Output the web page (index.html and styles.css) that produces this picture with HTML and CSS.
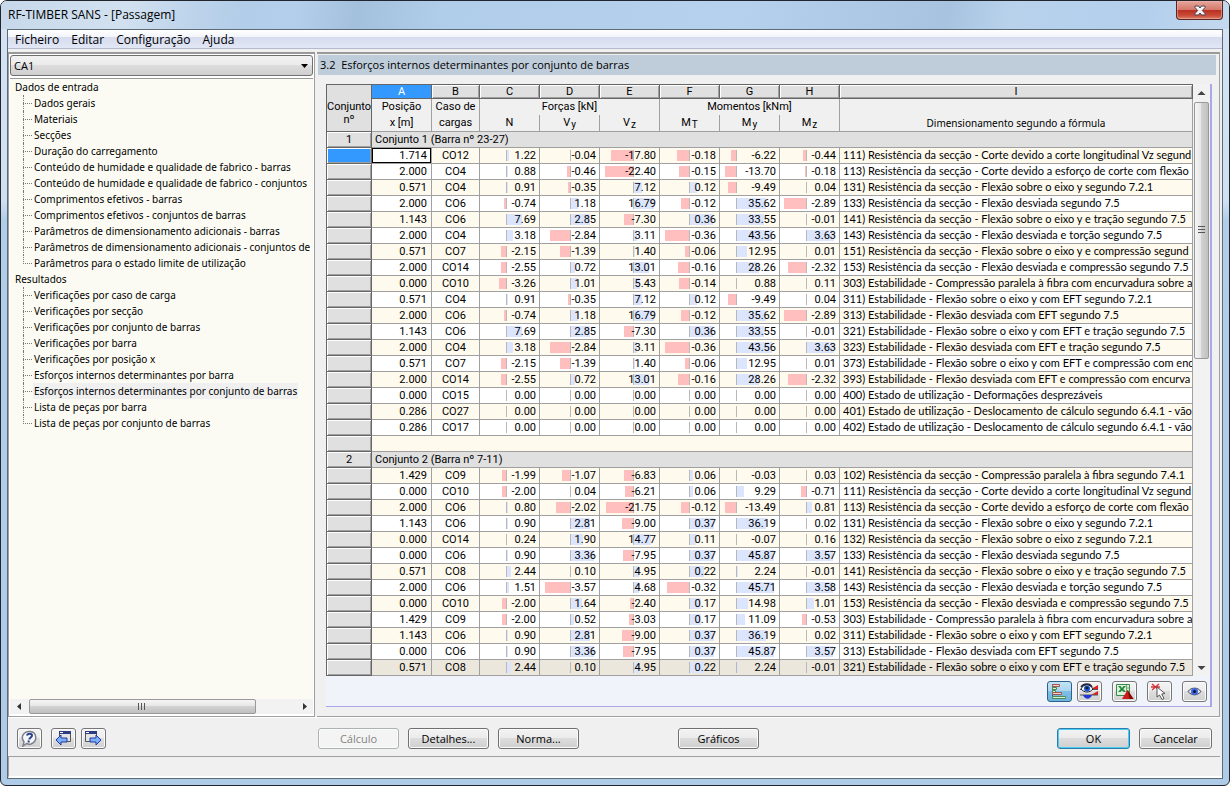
FILE: index.html
```html
<!DOCTYPE html>
<html lang="pt">
<head>
<meta charset="utf-8">
<title>RF-TIMBER SANS - [Passagem]</title>
<link rel="stylesheet" href="styles.css">
</head>
<body>
<div class="window">
  <header class="titlebar">
    <h1>RF-TIMBER SANS - [Passagem]</h1>
    <button class="close" aria-label="Fechar">
      <svg width="12" height="11" viewBox="0 0 12 11"><path d="M1 1h3.400L6 3l1.600-2H11v1.500L8.300 5.500 11 8.500V10H7.600L6 8l-1.600 2H1V8.500L3.700 5.500 1 2.500z" fill="#f4f4f4" stroke="#4b4552"/></svg>
    </button>
  </header>
  <div class="client">
    <nav class="menu">
      <button>Ficheiro</button><button>Editar</button><button>Configuração</button><button>Ajuda</button>
    </nav>
    <div class="panes">
      <aside class="sidebar">
        <div class="combo">
          <select aria-label="Caso"><option>CA1</option></select>
          <svg class="combo-arrow" width="7" height="4" viewBox="0 0 7 4"><path d="M0 0h7L3.500 4z"/></svg>
        </div>
        <div class="tree">
          <ul class="roots">
            <li>Dados de entrada
              <ul>
                <li><span>Dados gerais</span></li>
                <li><span>Materiais</span></li>
                <li><span>Secções</span></li>
                <li><span>Duração do carregamento</span></li>
                <li><span>Conteúdo de humidade e qualidade de fabrico - barras</span></li>
                <li><span>Conteúdo de humidade e qualidade de fabrico - conjuntos</span></li>
                <li><span>Comprimentos efetivos - barras</span></li>
                <li><span>Comprimentos efetivos - conjuntos de barras</span></li>
                <li><span>Parâmetros de dimensionamento adicionais - barras</span></li>
                <li><span>Parâmetros de dimensionamento adicionais - conjuntos de</span></li>
                <li><span>Parâmetros para o estado limite de utilização</span></li>
              </ul>
            </li>
            <li>Resultados
              <ul>
                <li><span>Verificações por caso de carga</span></li>
                <li><span>Verificações por secção</span></li>
                <li><span>Verificações por conjunto de barras</span></li>
                <li><span>Verificações por barra</span></li>
                <li><span>Verificações por posição x</span></li>
                <li><span>Esforços internos determinantes por barra</span></li>
                <li><span class="current">Esforços internos determinantes por conjunto de barras</span></li>
                <li><span>Lista de peças por barra</span></li>
                <li><span>Lista de peças por conjunto de barras</span></li>
              </ul>
            </li>
          </ul>
        </div>
        <div class="hscroll">
          <svg width="17" height="15" viewBox="0 0 17 15"><path d="M11 4v7L7 7.500z" fill="#333"/></svg>
          <div class="htrack"><div class="hthumb"><i></i><i></i><i></i></div></div>
          <svg width="17" height="15" viewBox="0 0 17 15"><path d="M7 4v7l4-3.500z" fill="#333"/></svg>
        </div>
      </aside>
      <main class="main">
        <h2>3.2&nbsp; Esforços internos determinantes por conjunto de barras</h2>
        <section class="sheet">
          <div class="grid-area">
            <table>
              <colgroup><col class="w-head"><col class="w-num"><col class="w-case"><col class="w-num"><col class="w-num"><col class="w-num"><col class="w-num"><col class="w-num"><col class="w-num"><col></colgroup>
              <thead>
                <tr class="letters"><th rowspan="3" class="corner">Conjunto<br>nº</th><th class="active">A</th><th>B</th><th>C</th><th>D</th><th>E</th><th>F</th><th>G</th><th>H</th><th>I</th></tr>
                <tr class="names"><th>Posição</th><th>Caso de</th><th colspan="3">Forças [kN]</th><th colspan="3">Momentos [kNm]</th><th></th></tr>
                <tr class="units"><th>x [m]</th><th>cargas</th><th>N</th><th>V<sub>y</sub></th><th>V<sub>z</sub></th><th>M<sub>T</sub></th><th>M<sub>y</sub></th><th>M<sub>z</sub></th><th>Dimensionamento segundo a fórmula</th></tr>
              </thead>
              <tbody id="rows"></tbody>
            </table>
            <div class="vscroll">
              <svg width="17" height="18" viewBox="0 0 17 18"><path d="M4.500 11h8l-4-4z" fill="#444"/></svg>
              <div class="vtrack"><div class="vthumb"><i></i><i></i><i></i></div></div>
              <svg width="17" height="16" viewBox="0 0 17 16"><path d="M4.500 6h8l-4 4z" fill="#444"/></svg>
            </div>
          </div>
          <div class="tools">
            <button class="icon on" aria-label="Barras">
              <svg width="21" height="17" viewBox="0 0 21 17"><path d="M3.500 1v15" stroke="#555"/><path fill="#fbd0ca" stroke="#9a5a54" d="M3.500 1.500h7v2h-7z"/><path fill="#d0f6d0" stroke="#4f8a5a" d="M3.500 4.500h4v2h-4zM3.500 7.500h3v2h-3z"/><path fill="#fbd0ca" stroke="#9a5a54" d="M3.500 9.500h9v2h-9z"/><path fill="#d0f6d0" stroke="#4f8a5a" d="M3.500 13.500h13v2h-13z"/></svg>
            </button>
            <button class="icon" aria-label="Ver diagramas">
              <svg width="21" height="17" viewBox="0 0 21 17"><path d="M12 6l7-4v4zM12 12l7-4v4z" fill="#d22"/><path d="M1 6.500h18M1 12h18" stroke="#555"/><path d="M2 6C4 1 11 0 14 6c-3 4-9 4-12 0z" fill="#eef4ff" stroke="#223"/><path d="M2 4C5 0 11 0 13 4" fill="none" stroke="#223" stroke-width="1.500"/><circle cx="8" cy="5.500" r="3" fill="#1c50c8"/><circle cx="8" cy="5" r="1.300" fill="#021"/><path d="M4 12h9c-2 5-7 5-9 0z" fill="#2337d8"/></svg>
            </button>
            <button class="icon gap" aria-label="Exportar para Excel">
              <svg width="21" height="17" viewBox="0 0 21 17"><path d="M2.500 1.500h13v11h-13z" fill="#dff0df" stroke="#3a8a4a"/><path d="M12.500 2v10M12.500 5h3M12.500 8h3" stroke="#6a6"/><path d="M4 3h2.500L8 5l1.500-2H12L9.300 6l2.700 3H9.500L8 7.500 6.500 9H4l2.700-3z" fill="#1f8a3c"/><path d="M13.500 7l6 9H8z" fill="#cf1a1a"/><path d="M13.500 7l6 9h-4z" fill="#7e0808"/></svg>
            </button>
            <button class="icon gap" aria-label="Selecionar">
              <svg width="21" height="17" viewBox="0 0 21 17"><path d="M3 1l7 6M10 1L3 7M2 4h9" stroke="#d8343c" stroke-width="1.400"/><path d="M8 4v10l2.500-2 2.500 4.500 2-1-2.300-4.500 3.300-.500z" fill="#fff" stroke="#555"/></svg>
            </button>
            <button class="icon gap" aria-label="Visibilidade">
              <svg width="21" height="17" viewBox="0 0 21 17"><path d="M4 8.500C7 4 14 4 17 8.500c-4 4.500-9 4.500-13 0z" fill="#dfe6f2" stroke="#445"/><circle cx="10.500" cy="8.500" r="3.500" fill="#3d68d8"/><circle cx="10.500" cy="8.500" r="1.500" fill="#06103c"/></svg>
            </button>
          </div>
        </section>
      </main>
    </div>
    <footer class="actions">
      <div class="quick">
        <button class="icon" aria-label="Ajuda">
          <svg width="21" height="17" viewBox="0 0 21 17"><path d="M4 16l1-4C1 7 5 1 11 1.500c7 .500 8 10 1 12.500-2 .500-3 .200-4.500-.500z" fill="#f5f6f8" stroke="#7c8088" stroke-width="1.500"/><path d="M8 5.500C8.500 3 13 3 13 5.500c0 2-2.500 2-2.700 4M9.800 10.500l-.300 2" fill="none" stroke="#2b418e" stroke-width="2"/></svg>
        </button>
        <button class="icon" aria-label="Anterior">
          <svg width="21" height="17" viewBox="0 0 21 17"><path d="M6.500 1.500h11v10h-11z" fill="#e4e4e4" stroke="#555"/><path d="M6 1h12v3H6z" fill="#2c3c80"/><path d="M7 2.500h3" stroke="#fff"/><path d="M3 10l5-5v3h6v4H8v3z" fill="#7cb0ff" stroke="#1d3a9a"/></svg>
        </button>
        <button class="icon" aria-label="Seguinte">
          <svg width="21" height="17" viewBox="0 0 21 17"><path d="M2.500 1.500h11v10h-11z" fill="#e4e4e4" stroke="#555"/><path d="M2 1h12v3H2z" fill="#2c3c80"/><path d="M3 2.500h3" stroke="#fff"/><path d="M18 10l-5-5v3H7v4h6v3z" fill="#7cb0ff" stroke="#1d3a9a"/></svg>
        </button>
      </div>
      <button class="btn wide" disabled>Cálculo</button>
      <button class="btn wide">Detalhes...</button>
      <button class="btn wide">Norma...</button>
      <button class="btn wide graphics">Gráficos</button>
      <button class="btn default">OK</button>
      <button class="btn">Cancelar</button>
    </footer>
    <div class="status"></div>
  </div>
</div>
<script src="rows.js"></script>
</body>
</html>
```

FILE: styles.css
```css
* { box-sizing: border-box; }
body { margin: 0; background: #fff; color: #000; font: 10px/16px "Noto Sans", "Open Sans", sans-serif; }
h1, h2, ul { margin: 0; padding: 0; font-weight: normal; list-style: none; }
button, select { font: inherit; color: inherit; margin: 0; }
svg { display: block; flex: none; }

.window {
  min-height: 100vh; display: flex; flex-direction: column;
  padding: 0 6px 6px; border: 1px solid #22262c; border-radius: 7px 7px 6px 6px;
  background: linear-gradient(#d3e3f4 0, #cfe0f2 200px, #b0cde9 220px, #aecbe8 100%);
}
.titlebar {
  display: flex; justify-content: space-between; align-items: flex-start; height: 28px; margin: 0 -6px; padding-left: 7px;
  border-radius: 6px 6px 0 0;
  background: linear-gradient(100deg, #c6d8ea 0, #d2e1f0 10%, #bcd3ea 16%, #b2cde9 20%, #b4cfeb 24%, #a3c0dd 29%, #b0cdea 36%, #b5d1ed 60%, #a7c3df 77%, #b8d2ec 82%, #b3cfec 93%, #c4d9ee 100%);
}
.titlebar h1 { font: 12px/28px "Open Sans", "Noto Sans", sans-serif; }
.close {
  display: flex; justify-content: center; align-items: center; width: 47px; height: 19px; margin-right: 6px; padding: 0;
  border: 1px solid #5b2524; border-top: 0; border-radius: 0 0 4px 4px;
  background: linear-gradient(#e6a79c 0, #d5786b 48%, #b92f1f 50%, #c94a38 80%, #dc8168 100%); box-shadow: inset 0 0 0 1px #f0b8ae88;
}
.client { flex: 1; display: flex; flex-direction: column; border: 1px solid #5d6a78; background: #f0f0f0; }

.menu { display: flex; height: 19px; padding-left: 2px; border-bottom: 1px solid #b5bbcc; background: linear-gradient(#fff 0, #f3f5fb 38%, #d7dcee 40%, #e2e7f6 100%); }
.menu button { padding: 0 5px; margin-right: 2px; border: 0; background: none; font: 12px/19px "Open Sans", sans-serif; }

.panes { flex: 1; display: flex; gap: 2px; margin: 3px 2px 0 0; }
.sidebar { width: 307px; flex: none; display: flex; flex-direction: column; padding: 1px; border: 1px solid #a0a0a0; border-top: 2px solid #999; background: #fff; }
.combo { position: relative; height: 22px; }
.combo select { width: 100%; height: 21px; padding: 0 3px; border: 1px solid #707070; border-radius: 3px; appearance: none; background: linear-gradient(#f2f2f2 0, #ebebeb 48%, #ddd 50%, #cfcfcf 100%); font: 11px/19px "Open Sans", sans-serif; }
.combo-arrow { position: absolute; right: 5px; top: 9px; }
.tree { flex: 1; margin-top: 1px; border-top: 1px solid #999; background: #fbfbf3; overflow: hidden; white-space: nowrap; }
.roots > li { padding-left: 5px; }
.roots ul { margin-left: 8px; }
.roots ul li { position: relative; padding-left: 10px; }
.roots ul li::before { content: ""; position: absolute; left: 0; top: 0; width: 1px; height: 100%; border-left: 1px dotted #777; }
.roots ul li::after { content: ""; position: absolute; left: 0; top: 8px; width: 9px; border-top: 1px dotted #777; }
.roots ul li:last-child::before { height: 9px; }
.roots ul span { display: inline-block; padding: 0 1px; }
.roots .current { background: #f0f0f0; }
.hscroll { display: flex; height: 15px; margin-bottom: 1px; background: #f2f2f2; }
.htrack { flex: 1; padding-left: 2px; }
.hthumb { display: flex; justify-content: center; align-items: center; gap: 1px; width: 85%; height: 15px; border: 1px solid #999; border-radius: 2px; background: linear-gradient(#f5f5f5 0, #e6e6e6 48%, #d2d2d2 50%, #c0c0c0 100%); }
.hthumb i { width: 2px; height: 7px; border-left: 1px solid #555; }

.main { flex: 1; min-width: 0; padding: 1px 3px 9px 0; border: 1px solid #a0a0a0; border-left: 0; border-top: 2px solid #999; }
.main h2 { height: 20px; padding-left: 2px; margin-left: 1px; background: #bfccda; font: 11px/20px "Open Sans", sans-serif; }
.sheet { margin: 9px 4px 0 9px; border-right: 2px solid #aaa8e8; border-bottom: 1px solid #aaa8e8; background: #f0f3f9; }
.grid-area { display: flex; }

table { flex: 1; min-width: 0; width: 0; table-layout: fixed; border-spacing: 0; border-top: 1px solid #666; border-left: 1px solid #666; background: #fff; font: 11px/15px Roboto, "Liberation Sans", sans-serif; }
.w-head { width: 45px; } .w-num { width: 60px; } .w-case { width: 48px; }
th, td { padding: 0; border-right: 1px solid #a0a0a0; border-bottom: 1px solid #a0a0a0; font-weight: normal; white-space: nowrap; overflow: hidden; }
thead th { background: #f0f0f0; }
.letters th { height: 14px; line-height: 12px; background: #e0e0e0; border-color: #666; box-shadow: inset 1px 1px #fff, inset -1px -1px #a0a0a0; }
.letters .active { background: #3399ff; color: #fff; box-shadow: none; }
.letters .corner { border-color: #666; box-shadow: none; line-height: 13px; padding-top: 10px; }
.names th { height: 16px; line-height: 16px; border-bottom: 0; }
.units th { height: 17px; line-height: 14px; }
.units sub { vertical-align: -2px; line-height: 8px; font-size: 10px; padding-left: 1px; }
.units th:last-child { font-size: 10px; font-family: "Noto Sans", sans-serif; }
tbody th, tbody td { height: 16px; }
tbody th { background: #e0e0e0; border-color: #666; box-shadow: inset 1px 1px #fff, inset -1px -1px #a0a0a0; }
tbody tr:nth-child(even) td { background: #fffaee; }
tbody tr.group td { background: #e0e0e0; padding-left: 3px; }
tbody tr.last td { background: #ece7dc; }
tbody th.active { background: #3399ff; }
.pos { text-align: right; padding-right: 4px; }
tbody td.pos.active { background: #fff; box-shadow: inset 0 0 0 1px #000; }
.case { text-align: center; }
.val { position: relative; text-align: right; padding-right: 3px; }
.val b { position: relative; font-weight: normal; }
.axis, .bar { position: absolute; top: 2px; bottom: 2px; }
.axis { width: 1px; background: #b8b8b8; }
.bar { background: #dbe5fd; }
.bar.neg { background: #ffbfbf; }
.formula { padding: 0 0 0 3px; font-family: Lato, sans-serif; }
.formula div { overflow: hidden; height: 15px; line-height: 14px; }

.vscroll { width: 17px; display: flex; flex-direction: column; background: #f2f2f2; }
.vtrack { flex: 1; padding: 0 1px; }
.vthumb { display: flex; flex-direction: column; justify-content: center; align-items: center; gap: 1px; height: 46%; border: 1px solid #999; border-radius: 2px; background: linear-gradient(90deg, #f5f5f5 0, #e6e6e6 48%, #d2d2d2 50%, #c0c0c0 100%); }
.vthumb i { width: 7px; height: 2px; border-top: 1px solid #555; }

.tools { display: flex; justify-content: flex-end; gap: 5px; height: 30px; padding: 5px 3px 0 0; }
.tools .gap { margin-left: 5px; }
.icon { display: flex; justify-content: center; align-items: center; width: 25px; height: 21px; padding: 0; border: 1px solid #777; border-radius: 3px; background: linear-gradient(#f4f4f4 0, #ececec 48%, #dedede 50%, #d0d0d0 100%); box-shadow: inset 0 0 0 1px #fbfbfb; }
.icon.on { border-color: #2c628b; background: linear-gradient(#c4e2f4 0, #a8d5ef 48%, #7fbfe4 50%, #6cb3dc 100%); box-shadow: none; }

.actions { display: flex; gap: 9px; padding: 10px 8px 7px 9px; border-bottom: 1px solid #a0a0a0; margin: 0 2px 0 0; border-top: 1px solid #fff; }
.quick { width: 292px; display: flex; gap: 5px; }
.quick .icon:first-child { margin-right: 4px; }
.btn { width: 73px; height: 21px; padding: 0; border: 1px solid #707070; border-radius: 3px; background: linear-gradient(#f3f3f3 0, #ebebeb 48%, #ddd 50%, #cfcfcf 100%); box-shadow: inset 0 0 0 1px #fbfbfb; font: 11px/18px "Open Sans", sans-serif; }
.wide { width: 81px; }
.btn:disabled { border-color: #adb2b5; background: #f4f4f4; color: #838383; }
.graphics { margin: 0 auto 0 90px; }
.default { border-color: #2c7ea8; box-shadow: inset 0 0 0 1px #49cdf6; }
.status { height: 21px; border-bottom: 2px solid #fff; border-left: 1px solid #a0a0a0; }
```

FILE: rows.js
```js
// Position of the zero line inside the cell and pixels per unit, for N, Vy, Vz, MT, My, Mz.
const axes = [[26, 2.1], [30, 7.1], [33, 1.25], [29, 68], [16, 0.83], [26, 7.6]];

const corte = 'Resistência da secção - Corte devido a ';
const flexao = 'Resistência da secção - Flexão ';
const estab = 'Estabilidade - Flexão ';
const estado = 'Estado de utilização - ';
const longitudinal = corte + 'corte longitudinal Vz segund';
const esforco = corte + 'esforço de corte com flexão';
const encurvadura = 'Estabilidade - Compressão paralela à fibra com encurvadura sobre a';

const groups = [
  { no: 1, title: 'Conjunto 1 (Barra nº 23-27)', rows: [
    ['1.714', 'CO12', '1.22 -0.04 -17.80 -0.18 -6.22 -0.44', '111) ' + longitudinal],
    ['2.000', 'CO4', '0.88 -0.46 -22.40 -0.15 -13.70 -0.18', '113) ' + esforco],
    ['0.571', 'CO4', '0.91 -0.35 7.12 0.12 -9.49 0.04', '131) ' + flexao + 'sobre o eixo y segundo 7.2.1'],
    ['2.000', 'CO6', '-0.74 1.18 16.79 -0.12 35.62 -2.89', '133) ' + flexao + 'desviada segundo 7.5'],
    ['1.143', 'CO6', '7.69 2.85 -7.30 0.36 33.55 -0.01', '141) ' + flexao + 'sobre o eixo y e tração segundo 7.5'],
    ['2.000', 'CO4', '3.18 -2.84 3.11 -0.36 43.56 3.63', '143) ' + flexao + 'desviada e torção segundo 7.5'],
    ['0.571', 'CO7', '-2.15 -1.39 1.40 -0.06 12.95 0.01', '151) ' + flexao + 'sobre o eixo y e compressão segund'],
    ['2.000', 'CO14', '-2.55 0.72 13.01 -0.16 28.26 -2.32', '153) ' + flexao + 'desviada e compressão segundo 7.5'],
    ['0.000', 'CO10', '-3.26 1.01 5.43 -0.14 0.88 0.11', '303) ' + encurvadura],
    ['0.571', 'CO4', '0.91 -0.35 7.12 0.12 -9.49 0.04', '311) ' + estab + 'sobre o eixo y com EFT segundo 7.2.1'],
    ['2.000', 'CO6', '-0.74 1.18 16.79 -0.12 35.62 -2.89', '313) ' + estab + 'desviada com EFT segundo 7.5'],
    ['1.143', 'CO6', '7.69 2.85 -7.30 0.36 33.55 -0.01', '321) ' + estab + 'sobre o eixo y com EFT e tração segundo 7.5'],
    ['2.000', 'CO4', '3.18 -2.84 3.11 -0.36 43.56 3.63', '323) ' + estab + 'desviada com EFT e tração segundo 7.5'],
    ['0.571', 'CO7', '-2.15 -1.39 1.40 -0.06 12.95 0.01', '373) ' + estab + 'sobre o eixo y com EFT e compressão com enc'],
    ['2.000', 'CO14', '-2.55 0.72 13.01 -0.16 28.26 -2.32', '393) ' + estab + 'desviada com EFT e compressão com encurva'],
    ['0.000', 'CO15', '0.00 0.00 0.00 0.00 0.00 0.00', '400) ' + estado + 'Deformações desprezáveis'],
    ['0.286', 'CO27', '0.00 0.00 0.00 0.00 0.00 0.00', '401) ' + estado + 'Deslocamento de cálculo segundo 6.4.1 - vão'],
    ['0.286', 'CO17', '0.00 0.00 0.00 0.00 0.00 0.00', '402) ' + estado + 'Deslocamento de cálculo segundo 6.4.1 - vão']
  ] },
  { no: 2, title: 'Conjunto 2 (Barra nº 7-11)', rows: [
    ['1.429', 'CO9', '-1.99 -1.07 -6.83 0.06 -0.03 0.03', '102) Resistência da secção - Compressão paralela à fibra segundo 7.4.1'],
    ['0.000', 'CO10', '-2.00 0.04 -6.21 0.06 9.29 -0.71', '111) ' + longitudinal],
    ['2.000', 'CO6', '0.80 -2.02 -21.75 -0.12 -13.49 0.81', '113) ' + esforco],
    ['1.143', 'CO6', '0.90 2.81 -9.00 0.37 36.19 0.02', '131) ' + flexao + 'sobre o eixo y segundo 7.2.1'],
    ['0.000', 'CO14', '0.24 1.90 14.77 0.11 -0.07 0.16', '132) ' + flexao + 'sobre o eixo z segundo 7.2.1'],
    ['0.000', 'CO6', '0.90 3.36 -7.95 0.37 45.87 3.57', '133) ' + flexao + 'desviada segundo 7.5'],
    ['0.571', 'CO8', '2.44 0.10 4.95 0.22 2.24 -0.01', '141) ' + flexao + 'sobre o eixo y e tração segundo 7.5'],
    ['2.000', 'CO6', '1.51 -3.57 4.68 -0.32 45.71 3.58', '143) ' + flexao + 'desviada e torção segundo 7.5'],
    ['0.000', 'CO10', '-2.00 1.64 -2.40 0.17 14.98 1.01', '153) ' + flexao + 'desviada e compressão segundo 7.5'],
    ['1.429', 'CO9', '-2.00 0.52 -3.03 0.17 11.09 -0.53', '303) ' + encurvadura],
    ['1.143', 'CO6', '0.90 2.81 -9.00 0.37 36.19 0.02', '311) ' + estab + 'sobre o eixo y com EFT segundo 7.2.1'],
    ['0.000', 'CO6', '0.90 3.36 -7.95 0.37 45.87 3.57', '313) ' + estab + 'desviada com EFT segundo 7.5'],
    ['0.571', 'CO8', '2.44 0.10 4.95 0.22 2.24 -0.01', '321) ' + estab + 'sobre o eixo y com EFT e tração segundo 7.5']
  ] }
];

function valueCell(text, i) {
  const [zero, scale] = axes[i];
  const value = parseFloat(text);
  const width = Math.round(Math.abs(value) * scale);
  const left = value < 0 ? zero - width : zero;
  const bar = width ? `<span class="bar${value < 0 ? ' neg' : ''}" style="left:${left}px;width:${width}px"></span>` : '';
  return `<td class="val">${bar}<span class="axis" style="left:${zero}px"></span><b>${text}</b></td>`;
}

const html = groups.map((group, g) => {
  const head = `<tr class="group"><th>${group.no}</th><td colspan="9">${group.title}</td></tr>`;
  const body = group.rows.map(([pos, load, values, formula], r) => {
    const active = g === 0 && r === 0 ? ' active' : '';
    const last = g === 1 && r === group.rows.length - 1 ? ' class="last"' : '';
    return `<tr${last}><th class="${active}"></th><td class="pos${active}">${pos}</td><td class="case">${load}</td>` +
      values.split(' ').map(valueCell).join('') + `<td class="formula"><div>${formula}</div></td></tr>`;
  }).join('');
  return head + body;
});
document.getElementById('rows').innerHTML = html.join('<tr><th></th><td colspan="9"></td></tr>');
```
